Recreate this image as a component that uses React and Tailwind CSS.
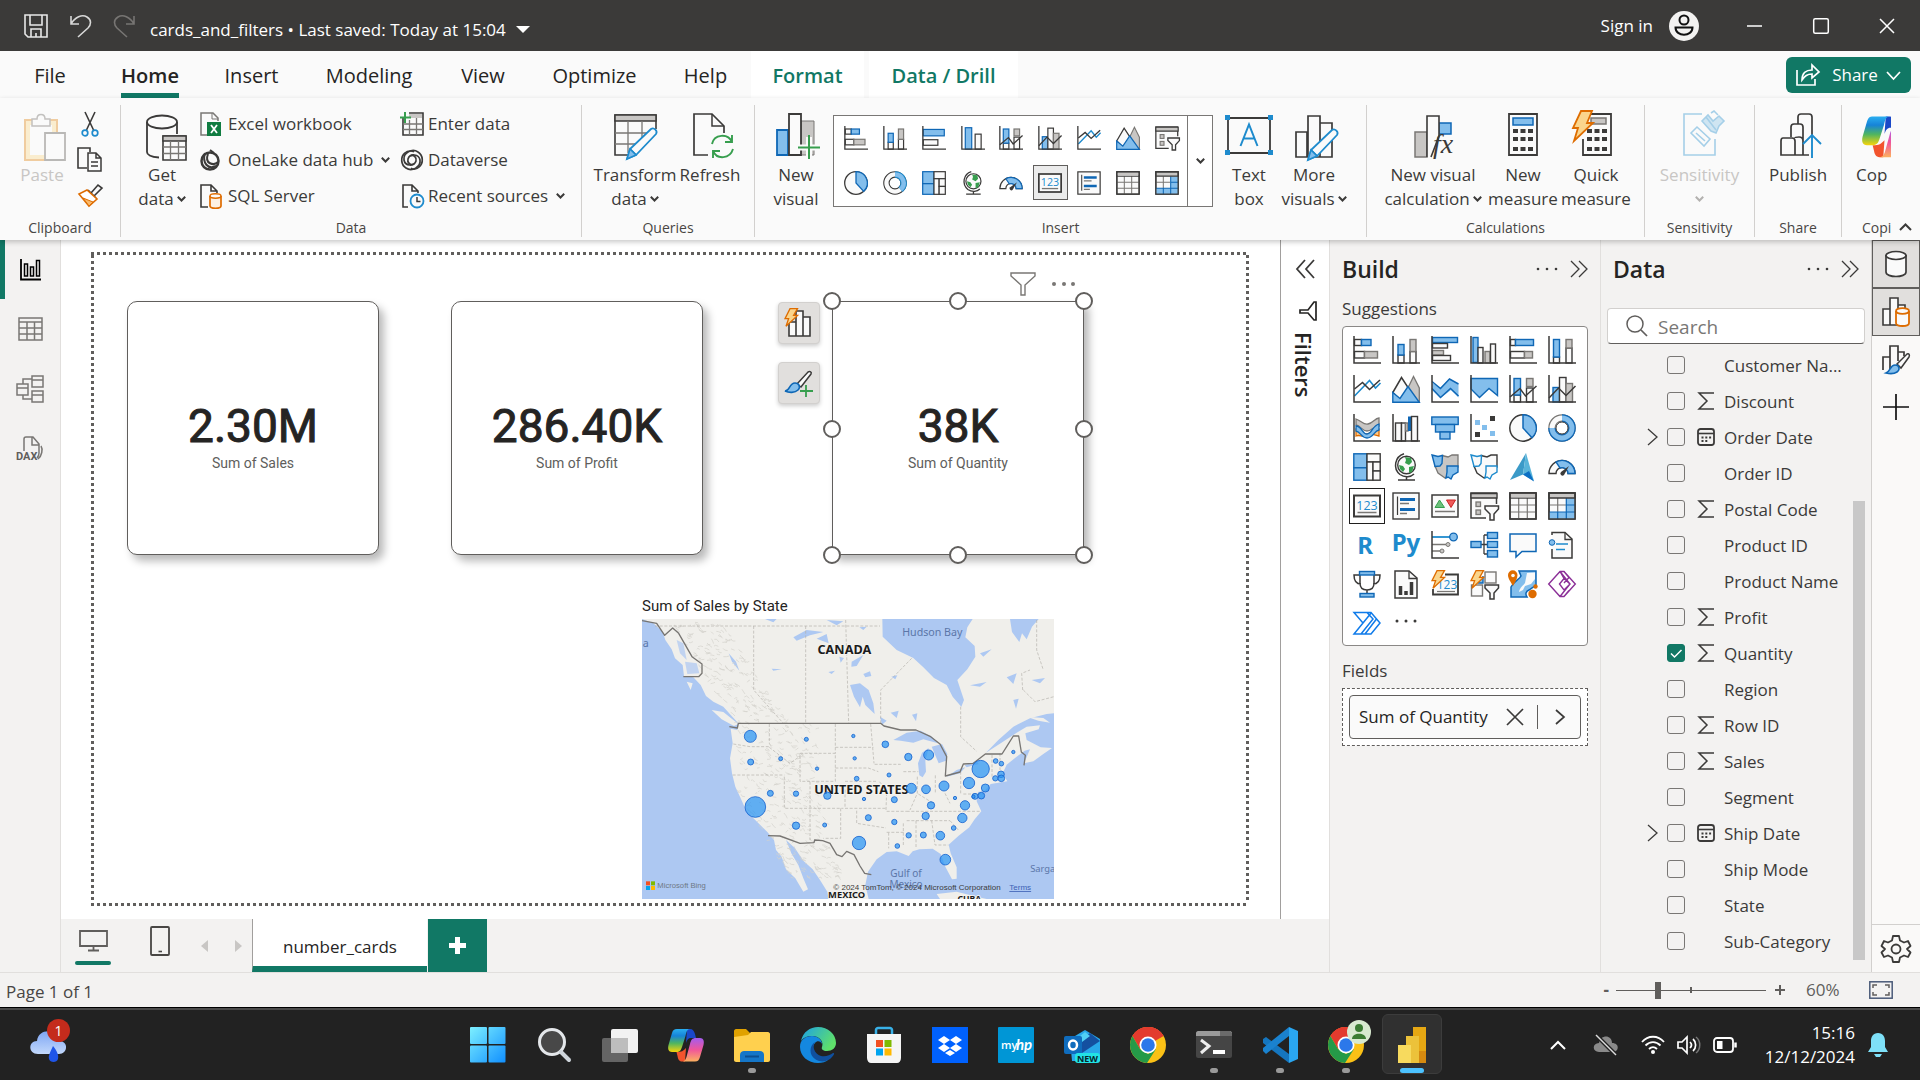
import React from "react";

const K = "#3b3a39";
const B = "#0f67b5";
const LB = "#83beec";
const G = "#797774";
const LG = "#c8c6c4";
const GR = "#379e4e";
const SKY = "#1e8bcd";
const OR = "#de6c00";

const FILLS = {
  w: ["#fafafa", K],
  b: [LB, B],
  g: [LG, G],
};

function Bx({ k = "w", x, y, w, h }) {
  return <rect x={x} y={y} width={w} height={h} fill={FILLS[k][0]} stroke={FILLS[k][1]} strokeWidth="1.4" />;
}
const Axis = () => <path d="M1 0V27H28" fill="none" stroke={K} strokeWidth="1.5" />;
const Bolt = () => <path d="M6 .7h7.5L9.6 7.4h4L2 18.3 4.6 10.6H1z" fill="#fad58c" stroke={OR} strokeWidth="1.3" />;
const Funnel = ({ x = 0, y = 0 }) => (
  <path transform={`translate(${x} ${y})`} d="M0 0H13.5V3L9 8V14H5V8L0 3Z" fill="#fafafa" stroke={K} strokeWidth="1.5" />
);

const ICONS = {
  stackedBar: <><Bx x={1.5} y={3.5} w={7} h={6} /><Bx k="b" x={8.5} y={3.5} w={9.5} h={6} /><Bx x={1.5} y={15.5} w={10} h={6.5} /><Bx k="g" x={11.5} y={15.5} w={13} h={6.5} /><Axis /></>,
  stackedCol: <><Bx x={6} y={19} w={6} h={8} /><Bx k="b" x={6} y={8.5} w={6} h={10.5} /><Bx x={18} y={15.5} w={6} h={11.5} /><Bx k="g" x={18} y={3.5} w={6} h={12} /><Axis /></>,
  clusteredBar: <><Bx k="b" x={1.5} y={1.5} w={25} h={5} /><Bx x={1.5} y={7.5} w={15} h={4.5} /><Bx k="g" x={1.5} y={14.5} w={11} h={4.5} /><Bx x={1.5} y={19.5} w={18} h={5} /><Axis /></>,
  clusteredCol: <><Bx k="b" x={3} y={1.5} w={5} h={25} /><Bx x={8} y={11.5} w={5} h={15.5} /><Bx k="g" x={15} y={15.5} w={5} h={11.5} /><Bx x={20.5} y={8} w={5} h={19} /><Axis /></>,
  bar2: <><Bx k="b" x={1.5} y={4} w={24.5} h={7.5} /><Bx x={1.5} y={16} w={17} h={6.5} /><Axis /></>,
  col2: <><Bx k="b" x={5} y={2} w={7.5} h={25} /><Bx x={16.5} y={9.5} w={7} h={17.5} /><Axis /></>,
  fullBar: <><Bx x={1.5} y={3.5} w={5} h={6} /><Bx k="b" x={6.5} y={3.5} w={18} h={6} /><Bx x={1.5} y={15.5} w={14} h={6.5} /><Bx k="g" x={15.5} y={15.5} w={8} h={6.5} /><Axis /></>,
  fullCol: <><Bx x={5.5} y={21} w={6} h={6} /><Bx k="b" x={5.5} y={3.5} w={6} h={17.5} /><Bx x={18} y={12} w={6} h={15} /><Bx k="g" x={18} y={3.5} w={6} h={8.5} /><Axis /></>,
  line: <><path d="M1.5 21L16.5 5.5 22.5 13 27.5 8" fill="none" stroke={SKY} strokeWidth="1.6" /><path d="M1.5 14L9.5 7.5 16.5 14.5 27 5" fill="none" stroke={K} strokeWidth="1.6" /><Axis /></>,
  area: <><path d="M14 17L21.5 1.5 27.3 13V27H14Z" fill={LG} stroke={G} strokeWidth="1.3" /><path d="M.8 17.5L9.5 2.5 19 17 9 26Z" fill="#fafafa" stroke={K} strokeWidth="1.5" /><path d="M.8 17.5L8 23.5 16 11.5 27.3 27.3H.8Z" fill={LB} stroke={B} strokeWidth="1.4" /></>,
  stackedArea: <><path d="M1 8L9.5 12.5 18 4 27.5 9V22.5L20 15 9.5 23 1 15Z" fill={LB} /><path d="M1 6.5L9.5 13.5 18.5 4 27.5 9M1 13.5L9.5 22.5 19.5 13.5 27.5 21" fill="none" stroke={B} strokeWidth="1.5" /><Axis /></>,
  fullArea: <><path d="M1 3.5H27.5V20.5L19 13.5 9.5 22.5 1 14Z" fill={LB} stroke={B} strokeWidth="1.4" /><Axis /></>,
  comboStack: <><Bx x={5} y={20} w={6.5} h={7} /><Bx k="b" x={5} y={3.5} w={6.5} h={16.5} /><Bx x={17.5} y={13} w={6.5} h={14} /><Bx k="g" x={17.5} y={3.5} w={6.5} h={8} /><path d="M1 22L11 13.5 16.5 21 27.5 11" fill="none" stroke={K} strokeWidth="1.5" /><Axis /></>,
  comboCluster: <><Bx k="b" x={5} y={12.5} w={6.5} h={14.5} /><Bx x={11.5} y={2.5} w={6.5} h={24.5} /><Bx k="g" x={18} y={8.5} w={6.5} h={18.5} /><path d="M1 23L10.5 13 18 20.5 27.5 11" fill="none" stroke={K} strokeWidth="1.5" /><Axis /></>,
  ribbon: <><path d="M3 15C8 16 8 21 14 20S21 14 26 15V22C21 21 20 19 14 21.5S8 20 3 22Z" fill="#fdc98a" stroke={OR} strokeWidth="1.3" /><path d="M3 5C9 7 10 11 15 10S22 4 26 4V12C20 12 19 17 14 17S8 12 3 11Z" fill={LG} stroke={G} strokeWidth="1.3" /><path d="M3 12C9 12 9 20 14 20S19 12 26 10V16C21 17 20 24 14 24S8 18 3 17Z" fill={LB} stroke={B} strokeWidth="1.3" /><Axis /></>,
  waterfall: <><Bx x={3.5} y={9} w={6} h={18} /><Bx x={9.5} y={9} w={4} h={18} /><Bx k="g" x={13.5} y={9} w={2.5} h={8} /><rect x="16" y="2.5" width="3" height="14.5" fill={B} /><Bx x={19.5} y={2.5} w={6} h={24.5} /><Axis /></>,
  funnel: <><Bx k="b" x={.8} y={3} w={26.4} h={7.5} /><Bx k="b" x={4.5} y={10.5} w={19} h={7.5} /><Bx k="b" x={9} y={18} w={10} h={7} /></>,
  scatter: <><g fill={LB}><rect x="5" y="6" width="5" height="5" /><rect x="12" y="11" width="5" height="5" /><rect x="20" y="17" width="5" height="5" /></g><g fill={K}><rect x="20" y="2" width="5" height="5" /><rect x="5" y="18" width="5" height="5" /></g><Axis /></>,
  pie: <><circle cx="14" cy="14" r="13.2" fill="#fafafa" stroke={K} strokeWidth="1.5" /><path d="M14 .8A13.2 13.2 0 0 1 23 23.7L14 14Z" fill={LB} stroke={B} strokeWidth="1.5" /></>,
  donut: <><circle cx="14" cy="14" r="10" fill="none" stroke={G} strokeWidth="7.5" /><circle cx="14" cy="14" r="10" fill="none" stroke="#fafafa" strokeWidth="5" /><path d="M14 4A10 10 0 1 1 4 14" fill="none" stroke={B} strokeWidth="7.5" /><path d="M14 4A10 10 0 1 1 4 14" fill="none" stroke={LB} strokeWidth="5" /><circle cx="14" cy="14" r="6" fill="none" stroke={K} /></>,
  ring: <><circle cx="14" cy="14" r="10" fill="none" stroke={K} strokeWidth="7.5" /><circle cx="14" cy="14" r="10" fill="none" stroke="#fafafa" strokeWidth="5" /><path d="M14 4A10 10 0 0 1 20.500 21.600" fill="none" stroke={SKY} strokeWidth="7.5" /><path d="M14 4A10 10 0 0 1 20.500 21.600" fill="none" stroke={LB} strokeWidth="5.2" /></>,
  treemap: <><Bx k="b" x={.8} y={.8} w={13} h={14} /><Bx k="b" x={.8} y={14.8} w={13} h={12.4} /><Bx x={14} y={.8} w={13.2} h={8.2} /><Bx x={14} y={9} w={6} h={18.2} /><Bx x={20} y={9} w={7.2} h={9} /><Bx x={20} y={18} w={7.2} h={9.2} /></>,
  globe: <><circle cx="14.5" cy="12" r="8.8" fill="#fafafa" stroke={K} strokeWidth="1.4" /><path d="M13 4l6 1 1 4-3 3-4-2 1-3zM17 14l5-1-2 6-3 1zM7 12l4 1 2 3-2 3-3-3z" fill={GR} /><path d="M12 .7A12 12 0 0 0 8 21.5C13 25 19 24 22 21M14.5 24V27M6 27H23" fill="none" stroke={K} strokeWidth="1.5" /></>,
  shapeMap: <><path d="M11 2.500L17 4l4-2h6v12l-4 6-6 3-3 2-7-5-3-7 5-3z" fill={LG} stroke={G} strokeWidth="1.3" /><path d="M1 2l6 1.500 4.500-1-.5 8-2 2.500-5 .500-1-4zM16 13h11v6l-5 3-2 4-3-2-2 1 1-6z" fill={LB} stroke={B} strokeWidth="1.4" /></>,
  filledMap: <><path d="M11 2.500L17 4l4-2h6v12l-4 6-6 3-3 2-7-5-3-7 5-3z" fill="#fafafa" stroke={K} strokeWidth="1.4" /><path d="M1 2l6 1.500 4.500-1-.5 8-2 2.500-5 .500-1-4zM16 13h11v6l-5 3-2 4-3-2-2 1 1-6z" fill="#fafafa" stroke={SKY} strokeWidth="1.4" /></>,
  azure: <><path d="M17 0L1 27 14 21.500Z" fill="#3b9ac8" /><path d="M17 0L14 21.500 25 28Z" fill="#58b4da" /><path d="M14 21.500L20 18 25 28.500Z" fill="#0c6fc4" /></>,
  gauge: <><path d="M1 20.500A13 13 0 0 1 27 20.500H20A6 6 0 0 0 8 20.500Z" fill="#fafafa" stroke={K} strokeWidth="1.4" /><path d="M8 9A13 13 0 0 1 27 20.500H20A6 6 0 0 0 12 15Z" fill={LB} stroke={B} strokeWidth="1.4" /><path d="M21 13l-5 9a2 2 0 0 1-3-3z" fill={K} /></>,
  card: <><rect x="1" y="3.500" width="26" height="21" fill="#fafafa" stroke={K} strokeWidth="2" /><text x="14" y="17.500" textAnchor="middle" fontSize="12.500" fill={SKY} fontFamily="Open Sans, sans-serif">123</text><path d="M4.500 20.500H23.500" stroke={G} strokeWidth="1.500" /></>,
  multiRow: <><Bx x={1} y={1} w={26} h={26} /><path d="M5.500 4.500V23" stroke={K} strokeWidth="1.200" /><path d="M8 7.500H23M8 17.500H23" stroke={B} strokeWidth="3" /><path d="M8 11.500H17M8 21.500H15" stroke={G} strokeWidth="1.500" /></>,
  kpi: <><rect x="1" y="3" width="26" height="22" fill="#fafafa" stroke={K} strokeWidth="1.500" /><path d="M4 15.500L8.500 8 13.500 15.500Z" fill="#6cc07a" stroke={GR} /><path d="M15.500 8H24.500L20 15.500Z" fill="#ef5a5a" stroke="#c22" /><path d="M4 19.500H24" stroke={G} strokeWidth="1.500" /></>,
  slicer: <><path d="M16 26H1V1H26.500V12" fill="#fafafa" stroke={K} strokeWidth="1.500" /><path d="M1 1.500H27V6H1Z" fill={LG} stroke={K} strokeWidth="1.300" /><g fill={LG} stroke={G} strokeWidth="1.300"><rect x="6" y="10" width="4.500" height="4.500" /><rect x="6" y="18" width="4.500" height="4.500" /></g><Funnel x={15} y={14} /></>,
  table: <><Bx x={1} y={1} w={26} h={26} /><path d="M9.700 6V27M18.300 6V27M1 13H27M1 20H27" stroke={G} strokeWidth="1.200" /><Bx x={1} y={1} w={26} h={5} /><path d="M2 2H26V5.500H2Z" fill={LG} /><rect x="1" y="1" width="26" height="26" fill="none" stroke={K} strokeWidth="1.500" /></>,
  matrix: <><Bx x={1} y={1} w={26} h={26} /><path d="M18.300 6H27V27H1V20H18.300Z" fill={LB} /><path d="M9.700 6V20M1 13H18" stroke={G} strokeWidth="1.200" /><path d="M9.700 20V27M18.300 6V27M18 13H27M1 20H27" stroke={B} strokeWidth="1.200" /><path d="M1 1H27V6H1Z" fill={LG} stroke={K} strokeWidth="1.400" /><rect x="1" y="1" width="26" height="26" fill="none" stroke={K} strokeWidth="1.500" /></>,
  r: <text x="12" y="22.500" textAnchor="middle" fontSize="24" fontWeight="700" fill={SKY} fontFamily="Noto Sans, sans-serif">R</text>,
  py: <text x="14" y="20" textAnchor="middle" fontSize="24" fontWeight="700" fill={SKY} fontFamily="Noto Sans, sans-serif">Py</text>,
  keyInfl: <><path d="M1 6H20" stroke={SKY} strokeWidth="1.800" /><path d="M1 13.500H15M1 20H9" stroke={G} strokeWidth="1.500" /><circle cx="22.500" cy="6" r="3.800" fill={LB} stroke={B} strokeWidth="1.300" /><circle cx="17" cy="13.500" r="2" fill={LG} stroke={G} /><circle cx="11" cy="20" r="2" fill={LG} stroke={G} /><Axis /></>,
  decomp: <><path d="M10 13.500H18M14 4H18M14 23H18M14 4V23" fill="none" stroke={K} strokeWidth="1.300" /><Bx k="b" x={1} y={10.500} w={10} h={6} /><Bx k="b" x={17.500} y={1.500} w={10} h={6} /><Bx k="b" x={17.500} y={10.500} w={10} h={6} /><Bx k="b" x={17.500} y={19.500} w={10} h={6.500} /></>,
  qna: <path d="M1 3H27V20.500H13L7 26V20.500H1Z" fill="#fafafa" stroke={B} strokeWidth="1.500" />,
  narrative: <><path d="M4 4V1.500H17L24 8V27H4V18" fill="#fafafa" stroke={K} strokeWidth="1.500" /><path d="M17 1.500V8.500H24" fill="none" stroke={K} strokeWidth="1.300" /><circle cx="4" cy="11.500" r="2.800" fill={LB} stroke={B} /><path d="M8 13H20M8 18.500H17" stroke={SKY} strokeWidth="1.500" /></>,
  trophy: <><path d="M7 4H21V13C21 18 18 20 14 20S7 18 7 13ZM7 5H1C1 11 4 14 8 14M21 5H27C27 11 24 14 20 14M14 20V24" fill="none" stroke={K} strokeWidth="1.500" /><Bx k="b" x={6.500} y={1.500} w={15} h={3.500} /><Bx k="b" x={7} y={23.500} w={14} h={3.500} /></>,
  report: <><path d="M3 1H17L25 8V28H3Z" fill="#fafafa" stroke={K} strokeWidth="1.500" /><path d="M17 1V8.500H25" fill="none" stroke={K} strokeWidth="1.300" /><path d="M8.500 25V16M14 25V21M19.500 25V12" stroke={K} strokeWidth="3.500" /></>,
  boltCard: <><path d="M14 4.500H27V24.500H2V19" fill="#fafafa" stroke={K} strokeWidth="1.800" /><text x="16" y="19" textAnchor="middle" fontSize="12" fill={SKY} fontFamily="Open Sans, sans-serif">123</text><path d="M6 21.500H24" stroke={G} strokeWidth="1.200" /><Bolt /></>,
  boltSlicer: <><g fill="#fafafa" stroke={G} strokeWidth="1.400"><rect x="15" y="2" width="11" height="11" /><rect x="1.500" y="15" width="11" height="11" /></g><path d="M8 13H13V6" fill={LB} stroke={B} strokeWidth="1.400" /><Funnel x={15} y={15} /><Bolt /></>,
  arcgis: <><path d="M2 17V27H18C16 24 17 21 20 20L27 15V1H10L12 6C10 10 6 10 2 17Z" fill={LB} stroke={B} strokeWidth="1.500" /><path d="M18 3l8-.5V9l-4 5-6 2-2 4-4 2c1-5 4-6 6-9z" fill="#fafafa" /><path d="M-1 5A4.700 4.700 0 0 1 8.500 5C8.500 9 6 12 4 16 2 12-1 9-1 5Z" fill={OR} /><circle cx="4" cy="5.500" r="1.800" fill="#fafafa" /><circle cx="23.500" cy="24" r="4.200" fill={OR} /><circle cx="26.500" cy="16.500" r="2.200" fill={OR} /></>,
  powerApps: <g fill="none" stroke="#8b2f97" strokeWidth="1.400"><path d="M12 1.500H16L27.300 14 16 26.500H12L.7 14ZM12 1.500L22 14 12 26.500M11.500 14L16 8.500 22 14 16 20ZM16 1.500L21 7.500 16 13M12 1.500L16 8.500M16 26.500L21 20.500" /></g>,
  automate: <g fill="none" stroke="#0f7bea" strokeWidth="1.500"><path d="M1 3.500H18L27 14 18 25H1L10 14ZM14 3.500L20 10 8 25M10 14L18.500 3.500M23.500 10L12 25" /></g>,
};

function Ic({ n, s = 28 }) {
  return (
    <svg viewBox="0 0 28 28" width={s} height={s} className="shrink-0 overflow-visible" aria-hidden="true">
      {ICONS[n]}
    </svg>
  );
}

function Svg({ w, h, children, vb }) {
  return (
    <svg width={w} height={h} viewBox={vb || `0 0 ${w} ${h}`} fill="none" className="shrink-0 overflow-visible" aria-hidden="true">
      {children}
    </svg>
  );
}

const Chev = ({ w = 9, c = K }) => (
  <Svg w={w} h={6} vb="0 0 9 6"><path d="M.8 .8L4.500 4.500 8.200 .8" stroke={c} strokeWidth="2" /></Svg>
);
const Pencil = () => (
  <path d="M14 46L17 36 38 16C41 14 45 18 43 21L23 42Z M17 36L23 42" fill="#fafafa" stroke={SKY} strokeWidth="1.800" />
);
const PencilTip = () => <path d="M14 46L17 36 23 42Z" fill={LB} stroke={SKY} strokeWidth="1.500" />;

const BIG = {
  paste: <g opacity=".9" transform="translate(4 0)"><path d="M2 7H34V47H2Z" fill="#faeccb" stroke="#f0c896" strokeWidth="2" /><path d="M7 12H29V42H7Z" fill="#fafafa" /><path d="M9 6H14C14 0 22 0 22 6H27V13H9Z" fill="#fafafa" stroke="#bdbbb9" strokeWidth="1.500" /><path d="M22 20H42V47H22Z" fill="#fafafa" stroke="#b3b1af" strokeWidth="1.800" /></g>,
  getData: <g transform="translate(5 1)"><ellipse cx="18" cy="8" rx="15" ry="6.500" stroke={K} strokeWidth="1.800" /><path d="M3 8V38C3 41 8 43 15 43.500M33 8V20" stroke={K} strokeWidth="1.800" /><path d="M19 22H42V46H19Z" fill="#fafafa" stroke={K} strokeWidth="1.600" /><path d="M19 22H42V27H19Z" fill={LG} stroke={K} strokeWidth="1.300" /><path d="M26.500 27V46M34.500 27V46M19 33H42M19 39.500H42" stroke={G} strokeWidth="1.300" /></g>,
  transform: <g transform="translate(1 0)"><path d="M15 42H2V2H43V16" fill="#fafafa" stroke={K} strokeWidth="1.600" /><path d="M2 2H43V8H2Z" fill={LG} stroke={K} strokeWidth="1.500" /><path d="M15 8V40M29 8V28M2 20H34M2 31H22" stroke={G} strokeWidth="1.300" /><Pencil /><PencilTip /></g>,
  refresh: <g transform="translate(3 0)"><path d="M18 42H4V1H22L34 13V20" stroke={K} strokeWidth="1.700" /><path d="M22 1V13H34" stroke={K} strokeWidth="1.500" /><path d="M22 31C24 21 38 20 42 29M43 36C40 46 27 47 23 38M42 22V29H35M23 45V38H30" stroke={GR} strokeWidth="1.900" /></g>,
  newVisual: <g transform="translate(2 0)"><path d="M2 17H13V42H2Z" fill={LB} stroke={B} strokeWidth="1.800" /><path d="M26 8H39V42H26Z" fill={LG} stroke={G} /><path d="M14 1H26V42H14Z" fill="#fafafa" stroke={K} strokeWidth="1.800" /><path d="M34 24V45M23 34.500H45" stroke="#fafafa" strokeWidth="6" /><path d="M34 22V46M23 34.500H45" stroke={GR} strokeWidth="2" /></g>,
  textBox: <g transform="translate(-1 1)"><path d="M3 4H45V39H3Z" stroke={K} strokeWidth="1.800" /><g fill={SKY}><rect x="0" y="1" width="5" height="5" /><rect x="43" y="1" width="5" height="5" /><rect x="0" y="36" width="5" height="5" /><rect x="43" y="36" width="5" height="5" /></g><path d="M15.500 32L24 10.500 32.500 32M18.500 24.500H29.500" stroke={SKY} strokeWidth="2" /></g>,
  moreVisuals: <g transform="translate(3 1)"><path d="M2 18H13V43H2ZM14 2H26V43H14ZM26 9H38V43H26Z" fill="#fafafa" stroke={K} strokeWidth="1.700" /><Pencil /><PencilTip /></g>,
  calcVisual: <g transform="translate(3 1)"><path d="M2 18H14V43H2Z" fill={LG} stroke={G} strokeWidth="1.500" /><path d="M26 9H38V20H26Z" fill={LB} stroke={B} strokeWidth="1.500" /><path d="M14 43V2H26V22L18 43" fill="#fafafa" stroke={K} strokeWidth="1.600" /><text x="20" y="39" fontSize="28" fontStyle="italic" fill={K} fontFamily="Liberation Serif, serif">fx</text></g>,
  measure: <><path d="M9 1H37V42H9Z" stroke={K} strokeWidth="1.800" /><path d="M13 5H33V12H13Z" fill={LB} stroke={B} strokeWidth="1.500" /><path d="M13 18H33M13 26H33M13 36H33" stroke={K} strokeWidth="4" strokeDasharray="5 2.500" /></>,
  quick: <><path d="M9 1H38V42H10V26" stroke={K} strokeWidth="1.800" /><path d="M18 5H33V11H18Z" fill={LG} stroke={G} strokeWidth="1.500" /><path d="M14 18H34M14 26H34M14 36H34" stroke={K} strokeWidth="4" strokeDasharray="5 2.500" /><path d="M8 -2H19L14 10H20L1 28 5 15H0Z" fill="#fad58c" stroke={OR} strokeWidth="1.800" /></>,
  sensitivity: <g stroke="#a5cfe8" strokeWidth="1.600" transform="translate(3 0)"><path d="M22 1H4V42H35V26" /><path d="M22 8L31 18 36 20 39 13 44 8 39 3 33 8 28 2Z" fill="#cfe5f2" /><path d="M26 4L36 17M31 0L34 -2 38 2" /><path d="M11 20L17 14 30 26 24 33ZM16 20L25 28" /></g>,
  publish: <g transform="translate(4 0)"><path d="M12 24V14C12 12 13 11 15 11H19M19 11V4C19 2 20 1 22 1H30C32 1 33 2 33 4V22M16 11H21C23 11 24 12 24 14V42M4 25H13C15 25 16 26 16 28V42H2V28C2 26 3 25 4 25ZM16 25C16 24 18 24 20 24C23 24 24 26 24 28M2 42H30" stroke={K} strokeWidth="1.700" /><path d="M33 45V23M24 31L33 22 42 31" stroke={SKY} strokeWidth="1.900" /></g>,
};

function BigBtn({ icon, label, second, chev, cls, muted }) {
  return (
    <button className={"flex shrink-0 flex-col items-center whitespace-nowrap " + cls + (muted ? " text-[#c8c6c4]" : " text-[#3b3a39]")}>
      <Svg w={46} h={48}>{BIG[icon]}</Svg>
      <span className="mt-[2px] leading-6">{label}</span>
      {(second || chev) && (
        <span className="flex h-6 items-center gap-[3px] leading-6">
          {second}
          {chev && <Chev c={muted ? "#b3b1af" : K} />}
        </span>
      )}
    </button>
  );
}

function Group({ name, cls, children, last }) {
  return (
    <section className={"flex shrink-0 flex-col " + cls + (last ? " overflow-hidden" : " border-r border-[#d2d0ce]")}>
      <div className="flex h-[114px] pt-2">{children}</div>
      <h2 className="pt-[3px] text-center text-sm leading-[18px] text-[#484644]">{name}</h2>
    </section>
  );
}

const SMALL = {
  excel: <><path d="M8 23H1V1H13L18 6V9" stroke={G} strokeWidth="1.500" /><path d="M12 1V7H18" stroke={G} /><rect x="7" y="10" width="14" height="14" fill="#107c41" /><path d="M11 13L17 21M17 13L11 21" stroke="#fff" strokeWidth="1.800" /></>,
  onelake: <><circle cx="10" cy="13" r="8.500" stroke={K} strokeWidth="2.500" /><path d="M5 5C2 15 8 22 16 18M8 6C4 16 14 18 18 14M10 2L14 5" stroke={K} strokeWidth="2" /></>,
  sql: <><path d="M8 23H1V1H11L17 7V9M11 1V7H17" stroke={K} strokeWidth="1.600" /><path d="M10 12V22C10 25 21 25 21 22V12" fill="#fdf1e3" stroke={OR} strokeWidth="1.700" /><ellipse cx="15.500" cy="12" rx="5.500" ry="2.200" fill="#fafafa" stroke={OR} strokeWidth="1.500" /></>,
  enter: <><path d="M3 6V23H23V1H9" stroke={K} strokeWidth="1.600" /><path d="M9 2H22V6H9Z" fill={LG} /><path d="M3 12H23M3 17.500H23M9.500 8V23M16.500 6V23" stroke={G} strokeWidth="1.300" /><path d="M5 0V11M0 5.500H11" stroke={GR} strokeWidth="2" /></>,
  dataverse: <g stroke={K} strokeWidth="1.700"><path d="M14 16C10 18 7 14 8 11C10 5 19 6 20 12C21 19 12 24 6 20C1 17 0 9 5 5C8 2 13 3 14 4" /><path d="M10 8C14 6 17 10 16 13C14 19 5 18 4 12C3 5 12 0 18 4C23 7 24 15 19 19C17 21 13 22 11 20" /></g>,
  recent: <><path d="M8 23H3V1H12L18 7V9M12 1V7H18" stroke={K} strokeWidth="1.600" /><circle cx="17" cy="17" r="6.500" fill="#fafafa" stroke={SKY} strokeWidth="1.800" /><path d="M17 13V17.500H20.500" stroke={K} strokeWidth="1.500" /></>,
  cut: <><path d="M7 0L16 19M17 0L8 19" stroke={K} strokeWidth="1.600" /><circle cx="7" cy="21" r="2.800" stroke={SKY} strokeWidth="1.700" /><circle cx="17" cy="21" r="2.800" stroke={SKY} strokeWidth="1.700" /></>,
  copy: <><path d="M9 20H0V0H12V4" stroke={K} strokeWidth="1.600" /><path d="M10 5H18L23 10V23H10ZM18 5V10H23M13 14H20M13 18H20" stroke={K} strokeWidth="1.500" /></>,
  brush: <><path d="M10 6L18 14M13 9L20 1 24 4 16 12" fill="#fafafa" stroke={K} strokeWidth="1.600" /><path d="M9 6L1 10 11 22 19 15Z" fill="#fff" stroke={OR} strokeWidth="1.600" /><path d="M5 14L15 18 11 22Z" fill="#f9b96a" stroke={OR} /></>,
};

function SmallBtn({ icon, children, chev }) {
  return (
    <button className="flex h-9 items-center gap-1 whitespace-nowrap leading-6 text-[#3b3a39]">
      <Svg w={24} h={24}>{SMALL[icon]}</Svg>
      {children}
      {chev && <span className="ml-1"><Chev /></span>}
    </button>
  );
}

const GALLERY = [
  "stackedBar", "stackedCol", "bar2", "col2", "comboStack", "comboCluster", "line", "area", "slicer",
  "pie", "ring", "treemap", "globe", "gauge", "card", "multiRow", "table", "matrix",
];
const VISUALS = [
  "stackedBar", "stackedCol", "clusteredBar", "clusteredCol", "fullBar", "fullCol",
  "line", "area", "stackedArea", "fullArea", "comboStack", "comboCluster",
  "ribbon", "waterfall", "funnel", "scatter", "pie", "donut",
  "treemap", "globe", "shapeMap", "filledMap", "azure", "gauge",
  "card", "multiRow", "kpi", "slicer", "table", "matrix",
  "r", "py", "keyInfl", "decomp", "qna", "narrative",
  "trophy", "report", "boltCard", "boltSlicer", "arcgis", "powerApps",
  "automate",
];

function TitleBar() {
  return (
    <header className="flex h-[51px] shrink-0 items-center bg-[#3b3a39] text-[17px] text-white">
      <button aria-label="Save" className="ml-6">
        <Svg w={24} h={24}><path d="M1 1H23V23H4L1 20ZM6 1V11H18V1M7 23V15H17V23M12 19V23" stroke="#e8e8e8" strokeWidth="1.600" /></Svg>
      </button>
      <button aria-label="Undo" className="ml-[22px]">
        <Svg w={22} h={24}><path d="M1 2V10H9M1 10C5 3 12 0 17 3S21 11 18 14L8 23" stroke="#d8d8d8" strokeWidth="1.600" /></Svg>
      </button>
      <button aria-label="Redo" className="ml-[22px]">
        <Svg w={22} h={24}><path d="M20 2V10H12M20 10C16 3 9 0 4 3S0 11 3 14L13 23" stroke="#777573" strokeWidth="1.600" /></Svg>
      </button>
      <button className="ml-[14px] mt-2 flex items-center gap-[10px]">
        cards_and_filters • Last saved: Today at 15:04
        <Svg w={14} h={8}><path d="M0 0H14L7 7Z" fill="#fff" /></Svg>
      </button>
      <div className="flex-1" />
      <button className="flex items-center gap-4">
        Sign in
        <Svg w={30} h={30}><circle cx="15" cy="15" r="15" fill="#f3f2f1" /><circle cx="15" cy="9" r="4.500" stroke="#111" strokeWidth="2" /><path d="M6.500 16.500H23.500C23.500 26 6.500 26 6.500 16.500Z" stroke="#111" strokeWidth="2" /></Svg>
      </button>
      <button aria-label="Minimize" className="ml-12"><Svg w={15} h={16}><path d="M0 8H15" stroke="#fff" strokeWidth="1.500" /></Svg></button>
      <button aria-label="Maximize" className="ml-[51px]"><Svg w={16} h={16}><rect x=".7" y=".7" width="14.600" height="14.600" rx="1.500" stroke="#fff" strokeWidth="1.500" /></Svg></button>
      <button aria-label="Close" className="ml-[50px] mr-[25px]"><Svg w={16} h={16}><path d="M1 1L15 15M15 1L1 15" stroke="#fff" strokeWidth="1.500" /></Svg></button>
    </header>
  );
}

function Tabs() {
  return (
    <nav className="flex h-[47px] shrink-0 bg-[#fafafa] pl-[10px] text-[20px] leading-[50px] text-[#252423]">
      <button className="w-[80px]">File</button>
      <button className="ml-2 flex w-[104px] justify-center font-semibold">
        <span className="h-[47px] border-b-[5px] border-[#117865]">Home</span>
      </button>
      <button className="w-[99px]">Insert</button>
      <button className="w-[136px]">Modeling</button>
      <button className="w-[92px]">View</button>
      <button className="w-[131px]">Optimize</button>
      <button className="w-[91px]">Help</button>
      <button className="w-[113px] bg-white font-semibold text-[#117865]">Format</button>
      <button className="ml-[5px] w-[149px] bg-white font-semibold text-[#117865]">Data / Drill</button>
      <div className="flex-1" />
      <button className="mr-[9px] mt-[6px] flex h-9 w-[125px] items-center justify-center gap-3 rounded-md bg-[#117865] text-[17px] leading-6 text-white">
        <Svg w={24} h={22}><path d="M1 6V21H19V15M6 16C6 9 10 6 16 6V1L23 8 16 14V10C11 10 9 12 6 16Z" stroke="#fff" strokeWidth="1.700" /></Svg>
        <span className="flex items-center gap-2">Share<Svg w={15} h={9}><path d="M1 1L7.500 8 14 1" stroke="#fff" strokeWidth="1.700" /></Svg></span>
      </button>
    </nav>
  );
}

function Ribbon() {
  return (
    <div className="relative z-10 flex h-[142px] shrink-0 items-stretch overflow-hidden bg-[#fafafa] pb-[3px] pt-[7px] text-[17px] shadow-[0_2px_5px_rgba(0,0,0,0.22)]">
      <Group name="Clipboard" cls="w-[121px]">
        <BigBtn icon="paste" label="Paste" cls="ml-3 w-[60px]" muted />
        <div className="-mt-2 ml-[6px] flex flex-col pt-px">
          {["cut", "copy", "brush"].map((n) => (
            <button key={n} aria-label={n} className="flex h-9 items-center"><Svg w={24} h={24}>{SMALL[n]}</Svg></button>
          ))}
        </div>
      </Group>
      <Group name="Data" cls="w-[461px]">
        <BigBtn icon="getData" label="Get" second="data" chev cls="ml-[9px] w-16" />
        <div className="-mt-[7px] ml-[6px] w-[200px]">
          <SmallBtn icon="excel">Excel workbook</SmallBtn>
          <SmallBtn icon="onelake" chev>OneLake data hub</SmallBtn>
          <SmallBtn icon="sql">SQL Server</SmallBtn>
        </div>
        <div className="-mt-[7px]">
          <SmallBtn icon="enter">Enter data</SmallBtn>
          <SmallBtn icon="dataverse">Dataverse</SmallBtn>
          <SmallBtn icon="recent" chev>Recent sources</SmallBtn>
        </div>
      </Group>
      <Group name="Queries" cls="w-[173px]">
        <BigBtn icon="transform" label="Transform" second="data" chev cls="ml-[11px] w-[84px]" />
        <BigBtn icon="refresh" label="Refresh" cls="ml-[2px] w-[62px]" />
      </Group>
      <Group name="Insert" cls="w-[612px]">
        <BigBtn icon="newVisual" label="New" second="visual" cls="ml-[13px] w-14" />
        <div className="ml-[9px] mt-[2px] flex h-[92px] w-[380px] border border-[#797775] bg-white">
          <div className="grid flex-1 grid-cols-9 pb-px pl-[3px] pr-px">
            {GALLERY.map((n) => (
              <button key={n} aria-label={n} className="flex items-center justify-center">
                <span className={"flex h-[35px] w-[35px] items-center justify-center " + (n === "card" ? "border border-[#605e5c] bg-[#ebebeb]" : "")}>
                  <Ic n={n} s={24} />
                </span>
              </button>
            ))}
          </div>
          <button aria-label="More visuals" className="flex w-[25px] items-center justify-center border-l border-[#797775]"><Chev /></button>
        </div>
        <BigBtn icon="textBox" label="Text" second="box" cls="ml-[10px] w-[52px]" />
        <BigBtn icon="moreVisuals" label="More" second="visuals" chev cls="ml-[1px] w-[76px]" />
      </Group>
      <Group name="Calculations" cls="w-[278px]">
        <BigBtn icon="calcVisual" label="New visual" second="calculation" chev cls="ml-3 w-[108px]" />
        <BigBtn icon="measure" label="New" second="measure" cls="w-[72px]" />
        <BigBtn icon="quick" label="Quick" second="measure" cls="ml-[1px] w-[72px]" />
      </Group>
      <Group name="Sensitivity" cls="w-[110px]">
        <BigBtn icon="sensitivity" label="Sensitivity" chev muted cls="w-full" />
      </Group>
      <Group name="Share" cls="w-[87px]">
        <BigBtn icon="publish" label="Publish" cls="w-full" />
      </Group>
      <Group name={<span className="ml-5 block text-left">Copi</span>} cls="w-[49px]" last>
        <button aria-label="Copilot" className="ml-[14px] flex w-16 shrink-0 flex-col text-[#3b3a39]">
          <Svg w={46} h={48}><CopilotMark x={6} y={1} s={1.25} /></Svg>
          <span className="mt-[2px] text-left leading-6">Cop</span>
        </button>
      </Group>
      <button aria-label="Collapse ribbon" className="ml-auto mr-2 self-end pb-[6px]">
        <Svg w={13} h={8}><path d="M1 7L6.500 1.500 12 7" stroke={K} strokeWidth="2" /></Svg>
      </button>
    </div>
  );
}

function CopilotMark({ x = 0, y = 0, s = 1 }) {
  return (
    <g transform={`translate(${x} ${y}) scale(${s})`}>
      <defs>
        <linearGradient id="cpa" x1="0" y1="0" x2="0" y2="1"><stop offset="0" stopColor="#2aaef0" /><stop offset=".3" stopColor="#1683d8" /><stop offset=".62" stopColor="#4fb560" /><stop offset="1" stopColor="#f7d40a" /></linearGradient>
        <linearGradient id="cpb" x1="0" y1="0" x2="0" y2="1"><stop offset="0" stopColor="#a35cf0" /><stop offset=".5" stopColor="#f0569a" /><stop offset="1" stopColor="#fcb060" /></linearGradient>
      </defs>
      <path d="M19 2H22C25 2 26 4 27 7L28 11H23C20 11 19 13 18 16Z" fill="#1a48c8" />
      <path d="M17 34.500H14C11 34.500 10 32 9.500 29L8.500 25C14 25 15 24 18 21Z" fill="#f2542d" />
      <path d="M9 2H22C19 2 18.500 5 17.500 9L14 20C13 23 12 25 8 25H4C.5 25 -.5 22 .5 18L4 6C5 3 6 2 9 2Z" fill="url(#cpa)" />
      <path d="M27 34.500H14C17 34.500 18 32 19 28L22 17C23 13 24 11 28 11H32C35.500 11 36.500 14 35.500 18L32 30C31 33 30 34.500 27 34.500Z" fill="url(#cpb)" />
    </g>
  );
}

function LeftRail() {
  return (
    <nav className="flex w-[61px] shrink-0 flex-col border-r border-[#e1dfdd] bg-[#f3f2f1]">
      <button aria-label="Report view" className="flex h-[59px] items-center border-l-[5px] border-[#117865] pl-[15px]">
        <Svg w={22} h={22}><path d="M1 0V20.500H21" stroke="#000" strokeWidth="1.800" /><path d="M4.500 5H7.500V17H4.500ZM10.500 8H13.500V17H10.500ZM16.500 1.500H19.500V17H16.500Z" stroke="#000" strokeWidth="1.500" /></Svg>
      </button>
      <button aria-label="Table view" className="flex h-[60px] items-center justify-center">
        <Svg w={25} h={24}><path d="M1 1H24V23H1ZM1 5H24M1 11H24M1 17H24M9 5V23M16.500 5V23" stroke={G} strokeWidth="1.500" /></Svg>
      </button>
      <button aria-label="Model view" className="flex h-[60px] items-center justify-center">
        <Svg w={28} h={28}><path d="M1 9H12V20H1ZM1 13H12M16 1H27V12H16ZM16 5H27M16 16H27V27H16ZM16 20H27M7 9V4H16M7 20V24H16" stroke={G} strokeWidth="1.500" /></Svg>
      </button>
      <button aria-label="DAX query view" className="flex h-[60px] items-center justify-center">
        <Svg w={28} h={26}><path d="M8 15V3C8 2 9 1 10 1H17L23 8V17C23 19 22 21 21 22M16 1V9H23M25 10C27 13 26 20 22 23" stroke={G} strokeWidth="1.500" /><text x="0" y="24" fontSize="11" fontWeight="700" fill="#605e5c" fontFamily="Roboto, sans-serif">DAX</text></Svg>
      </button>
    </nav>
  );
}

const STATES = [
  [361, 439, 18], [529, 448, 6], [670, 438, 5], [766, 463, 10], [362, 516, 9], [452, 506, 6], [674, 505, 5], [835, 501, 11],
  [896, 495, 15], [561, 536, 5], [680, 566, 7], [777, 555, 6], [1052, 537, 26], [1097, 513, 7], [1114, 521, 7], [1150, 486, 5],
  [1113, 553, 10], [1096, 565, 8], [1114, 565, 10], [1017, 579, 17], [1066, 594, 12], [942, 588, 15], [888, 598, 13], [844, 595, 15],
  [592, 617, 11], [498, 611, 8], [421, 610, 9], [376, 651, 31], [702, 627, 5], [793, 629, 9], [1035, 619, 9], [1054, 617, 10], [1030, 620, 5],
  [975, 624, 5], [1005, 646, 14], [903, 646, 11], [887, 678, 11], [997, 684, 14], [715, 683, 9], [793, 696, 8], [971, 714, 7],
  [498, 707, 11], [584, 705, 6], [687, 759, 20], [802, 768, 7], [836, 736, 8], [880, 735, 9], [931, 737, 13], [946, 809, 16],
];

let seed = 20241;
const rand = () => {
  seed = (seed * 16807) % 2147483647;
  return seed / 2147483647;
};

const RELIEF = Array.from({ length: 480 }, () => {
  const y = 95 + rand() * 770;
  const left = y < 400 ? 110 + (y - 90) * 0.65 : 318 + Math.max(0, y - 600) * 0.6;
  const right = y < 400 ? 270 + (y - 90) * 0.65 : 560 + Math.max(0, y - 600) * 0.25;
  const x = left + rand() * (right - left);
  const step = () => `${Math.round(2 + rand() * 7)} ${Math.round(rand() * 12 - 4)}`;
  return `M${Math.round(x)} ${Math.round(y)}l${step()} ${step()}`;
}).join("");

function SalesMap() {
  return (
    <figure className="absolute left-[548px] top-[341px] w-[412px]">
      <figcaption className="h-[23px] font-[Roboto] text-[15px] leading-5 text-[#252423]">Sum of Sales by State</figcaption>
      <svg viewBox="36 87 1236 840" className="block w-full" role="img" aria-label="Map of sales by state">
        <rect x="36" y="87" width="1236" height="840" fill="#adc8f2" />
        <g fill="#f0efeb">
          <path d="M36 87L70 100 98 125 106 150 125 178 135 205 158 225 162 258 190 262 212 285 228 318 250 335 280 350 305 378 325 400 322 420 302 416 308 460 300 505 306 550 316 590 332 625 350 665 378 692 412 726 432 750 438 780 455 800 468 838 496 865 520 905 534 898 520 865 505 825 484 790 468 750 495 775 520 812 548 838 570 870 592 905 596 927H716L706 885 714 845 740 808 770 786 800 784 836 798 848 784 868 778 908 776 932 792 946 830 966 868 980 866 980 832 962 790 956 764 985 738 1018 712 1034 688 1054 664 1040 634 1044 606 1064 602 1082 582 1132 574 1118 550 1130 524 1158 502 1184 482 1200 478 1182 520 1210 514 1240 492 1266 474 1232 472 1190 450 1186 430 1226 418 1230 406 1190 410 1160 428 1112 460 1068 488 1105 450 1150 410 1200 385 1250 372 1272 370V87Z" />
          <path d="M245 360L280 366 325 402 312 408 275 388Z M170 275L188 280 182 300Z M1190 380L1240 384 1260 398 1225 392Z M920 912L980 905 1040 920 1070 927H930Z" />
        </g>
        <g fill="#adc8f2">
          <path d="M757 87L758 140 800 180 850 204 880 232 912 264 950 285 968 320 994 350 1002 330 982 270 1012 238 1036 200 1034 168 1006 142 1012 112 1028 87Z" />
          <path d="M1140 87L1146 126 1168 156 1176 130 1190 148 1206 110 1226 87Z M405 87H440L430 97Z M790 450L830 428 872 422 906 440 924 460 880 448 850 458 812 452Z M868 556L864 520 876 488 896 474 886 512 888 545 878 562Z M905 470L936 462 952 492 948 512 926 520Z M950 560L980 540 1006 532 990 550Z M1004 526L1040 514 1046 522 1010 532Z" />
          <path d="M660 285L690 280 716 300 730 340 734 372 706 345 698 320 690 352 672 320Z M490 142L530 120 580 126 540 136 500 152Z M665 215L700 195 680 228 664 230Z M425 236L455 238 430 242Z M296 190L318 215 328 242 306 215Z M700 252L720 244 724 258 706 262Z M750 380L770 392 756 404Z M782 368L806 362 800 384Z M846 374L862 370 858 394Z M1130 262L1160 250 1150 282Z M1205 270L1245 264 1230 280Z M1050 190L1085 178 1060 200Z M1150 330L1166 326 1158 356Z M1020 286L1070 276 1050 290Z M590 90L640 94 620 106Z M595 246L615 242 605 252Z M560 146L590 132 596 160Z M628 200L642 204 632 218Z M784 260L802 256 796 268Z M688 112L710 110 700 120Z" />
          <path d="M140 150L160 160 170 210 150 190Z M165 215L200 220 208 250 172 252Z" opacity=".7" />
        </g>
        <path d={RELIEF} fill="none" stroke="#d3d1cc" strokeWidth="2" />
        <g fill="none" stroke="#b3b0aa" strokeWidth="2" strokeDasharray="9 5">
          <path d="M75 108H750M371 108V300L460 400M527 108V400M647 90L656 400M752 400V300L846 204M992 350V440L1040 484" />
          <path d="M418 402V460L425 472M310 462L360 470H418M308 555H463M463 560V655H640M510 490H616V574H510ZM418 472L480 520 508 500M616 402V490M616 472H730M722 402L732 520M616 534H715L745 545M645 574H740M734 523H812M540 575V750M645 585V655H770M748 575L770 600 768 660M632 655V745H580M680 662V700L768 714M770 664H830M776 728V775M820 545H865M862 560V610L840 660M916 556V610M865 612L910 640M830 664H1050M830 692H960M858 692V775M905 692L915 765H955M770 727H822M820 700V768M945 610L960 640M1000 612H1060M992 545V612M960 692L985 720M1086 495V560M1110 490V540M1178 300L1175 250 1200 240M1180 300L1215 335 1272 320M1220 90V180L1240 240" />
        </g>
        <g fill="none" stroke="#777572" strokeWidth="4" strokeLinejoin="round">
          <path d="M36 92L80 100 104 136 128 114 146 130 186 200 216 222V250L206 260H160" />
          <path d="M298 410L322 414 325 400H752L762 408 812 420 858 420 902 440 930 462 950 500 946 558 990 546 1000 522 1030 520 1066 492H1116L1130 470 1150 438H1166L1174 486 1186 496 1182 526" />
          <path d="M414 737L450 738 510 760 552 758 554 750 578 752 600 760 620 794 636 800 650 784 672 794 690 828 704 850 724 854" />
        </g>
        <g fontFamily="Noto Sans, sans-serif" textAnchor="middle">
          <g fontWeight="700" fontSize="38" fill="#1c1c1c" stroke="#f5f4f1" strokeWidth="5" paintOrder="stroke">
            <text x="643" y="191">CANADA</text>
            <text x="694" y="612">UNITED STATES</text>
            <text x="650" y="923" fontSize="28">MEXICO</text>
            <text x="1018" y="935" fontSize="26">CUBA</text>
          </g>
          <g fontSize="32" fill="#5b76a8">
            <text x="907" y="139">Hudson Bay</text>
            <text x="828" y="861" fontSize="30">Gulf of</text>
            <text x="828" y="893" fontSize="30">Mexico</text>
            <text x="1245" y="846" fontSize="28">Sargas</text>
            <text x="47" y="170">a</text>
          </g>
        </g>
        <g fill="#2894f4" fillOpacity=".72" stroke="#1a65cf" strokeWidth="2.500">
          {STATES.map(([x, y, r], i) => <circle key={i} cx={x} cy={y} r={r} />)}
        </g>
        <g fontFamily="Liberation Sans, sans-serif" fontSize="24">
          <path d="M48 874H60V886H48Z" fill="#f25022" /><path d="M63 874H75V886H63Z" fill="#7fba00" />
          <path d="M48 888H60V900H48Z" fill="#00a4ef" /><path d="M63 888H75V900H63Z" fill="#ffb900" />
          <text x="82" y="895" fontSize="23" fill="#6e7885">Microsoft Bing</text>
          <text x="610" y="900" fill="#3c3c3c">© 2024 TomTom, © 2024 Microsoft Corporation</text>
          <text x="1138" y="900" fill="#3b5fb5" textDecoration="underline">Terms</text>
        </g>
      </svg>
    </figure>
  );
}

const HANDLES = [
  "left-[-10px] top-[-10px]", "left-[116px] top-[-10px]", "right-[-10px] top-[-10px]",
  "left-[-10px] top-[118px]", "right-[-10px] top-[118px]",
  "left-[-10px] bottom-[-10px]", "left-[116px] bottom-[-10px]", "right-[-10px] bottom-[-10px]",
];

function NumberCard({ value, label, place, selected }) {
  return (
    <article className={"absolute top-[46px] flex h-[254px] w-[252px] flex-col items-center border border-[#605e5c] bg-white pt-[95px] font-[Roboto] shadow-[5px_6px_8px_rgba(0,0,0,0.28)] " + place + (selected ? "" : " rounded-[10px]")}>
      <span className="text-[46px] leading-[58px] text-[#252423] [-webkit-text-stroke:1px_#252423]">{value}</span>
      <span className="text-sm leading-4 text-[#605e5c]">{label}</span>
      {selected && HANDLES.map((h) => (
        <span key={h} className={"absolute h-[18px] w-[18px] rounded-full border-2 border-[#605e5c] bg-white " + h} />
      ))}
    </article>
  );
}

function Report() {
  return (
    <div className="flex min-w-0 flex-1 pb-[13px] pl-[30px] pr-[31px] pt-3">
      <div className="flex flex-1 bg-[repeating-linear-gradient(90deg,#605e5c_0_3px,#ffffff_3px_6px)] py-[3px]">
        <div className="flex flex-1 bg-[repeating-linear-gradient(180deg,#605e5c_0_3px,#ffffff_3px_6px)] px-[3px]">
          <div className="relative flex-1 bg-white">
            <NumberCard value="2.30M" label="Sum of Sales" place="left-[33px]" />
            <NumberCard value="286.40K" label="Sum of Profit" place="left-[357px]" />
            <NumberCard value="38K" label="Sum of Quantity" place="left-[738px]" selected />
            <div className="absolute left-[916px] top-[17px] flex items-center gap-4">
              <button aria-label="Filters on visual"><Svg w={26} h={24}><path d="M1 1H25V4L15 13V23H11V13L1 4Z" stroke={G} strokeWidth="1.400" /></Svg></button>
              <button aria-label="More options"><Svg w={24} h={6}><g fill={G}><circle cx="2" cy="3" r="2" /><circle cx="12" cy="3" r="2" /><circle cx="21" cy="3" r="2" /></g></Svg></button>
            </div>
            <div className="absolute left-[684px] top-[47px] flex flex-col gap-[18px]">
              <button aria-label="Build visual" className="flex h-[42px] w-[42px] items-center justify-center rounded-sm border border-[#d2d0ce] bg-[#e1dfdd] shadow-[0_2px_4px_rgba(0,0,0,0.2)]">
                <Svg w={30} h={30}><path d="M5 14H12V28H5ZM12 3H19V28H12ZM19 9H26V28H19Z" fill="#fafafa" stroke={K} strokeWidth="1.600" /><Bolt /></Svg>
              </button>
              <button aria-label="Format visual" className="flex h-[42px] w-[42px] items-center justify-center rounded-sm border border-[#d2d0ce] bg-[#e1dfdd] shadow-[0_2px_4px_rgba(0,0,0,0.2)]">
                <Svg w={30} h={30}><path d="M13 16L24 4C26 3 28 4 27 6L17 19Z" fill="#fafafa" stroke={K} strokeWidth="1.500" /><path d="M1 23C6 23 5 15 11 15C15 15 17 19 14 22C11 25 5 25 1 23Z" fill={LB} stroke={B} strokeWidth="1.600" /><path d="M22 17V29M16 23H29" stroke={GR} strokeWidth="1.800" /></Svg>
              </button>
            </div>
            <SalesMap />
          </div>
        </div>
      </div>
    </div>
  );
}

function FiltersPane() {
  return (
    <aside className="flex w-[49px] shrink-0 flex-col items-center border-l border-[#a19f9d] bg-white pt-[19px]">
      <button aria-label="Expand filters" className="ml-[2px]"><Svg w={20} h={20}><path d="M9 1L1 10 9 19M18 1L10 10 18 19" stroke={K} strokeWidth="1.800" /></Svg></button>
      <button className="mt-[22px] flex flex-col items-center">
        <span className="ml-[6px]"><Svg w={18} h={20}><path d="M17 1V19H15L9 12H1V9H9L15 1Z" stroke="#252423" strokeWidth="1.700" /></Svg></span>
        <span className="mr-[2px] mt-[11px] text-[22px] font-semibold leading-6 text-[#252423] [writing-mode:vertical-rl]">Filters</span>
      </button>
    </aside>
  );
}

function PaneHead({ title }) {
  return (
    <div className="flex h-[58px] items-center pl-3 pr-3">
      <h2 className="flex-1 text-[23px] font-semibold text-[#252423]">{title}</h2>
      <button aria-label="More options"><Svg w={22} h={4}><g fill={K}><circle cx="2" cy="2" r="1.300" /><circle cx="11" cy="2" r="1.300" /><circle cx="20" cy="2" r="1.300" /></g></Svg></button>
      <button aria-label="Collapse pane" className="ml-3"><Svg w={18} h={18}><path d="M1 1L9 9 1 17M9 1L17 9 9 17" stroke={K} strokeWidth="1.300" /></Svg></button>
    </div>
  );
}

function BuildPane() {
  return (
    <aside className="w-[271px] shrink-0 border-l border-[#e1dfdd] bg-[#f3f2f1]">
      <PaneHead title="Build" />
      <div className="px-3">
        <h3 className="h-7 text-[17px] leading-[22px] text-[#3b3a39]">Suggestions</h3>
        <div className="grid grid-cols-6 rounded-sm border border-[#8a8886] bg-white py-[3px] pl-1 pr-[5px]">
          {VISUALS.map((n) => (
            <button key={n} aria-label={n} className="flex h-[39px] items-center justify-center">
              <span className={"flex h-9 w-9 items-center justify-center " + (n === "card" ? "border border-[#201f1e]" : "")}><Ic n={n} /></span>
            </button>
          ))}
          <button aria-label="Get more visuals" className="flex items-center justify-center"><Svg w={22} h={4}><g fill={K}><circle cx="2" cy="0" r="1.500" /><circle cx="11" cy="0" r="1.500" /><circle cx="20" cy="0" r="1.500" /></g></Svg></button>
        </div>
        <h3 className="mt-[14px] h-7 text-[17px] leading-[22px] text-[#3b3a39]">Fields</h3>
        <div className="border border-dashed border-[#605e5c] bg-white p-[6px]">
          <div className="flex h-11 items-center rounded border border-[#605e5c] bg-[#fafafa] pl-[9px] pr-[15px] text-[17px] text-[#252423]">
            <span className="flex-1 whitespace-nowrap">Sum of Quantity</span>
            <button aria-label="Remove field"><Svg w={18} h={18}><path d="M1 1L17 17M17 1L1 17" stroke={K} strokeWidth="1.700" /></Svg></button>
            <span className="mx-[13px] h-6 w-px bg-[#605e5c]" />
            <button aria-label="Field options" className="ml-1"><Svg w={10} h={16}><path d="M1 1L9 8 1 15" stroke={K} strokeWidth="1.700" /></Svg></button>
          </div>
        </div>
      </div>
    </aside>
  );
}

const FIELDS = [
  ["Customer Na...", ""], ["Discount", "s"], ["Order Date", "d"], ["Order ID", ""], ["Postal Code", "s"], ["Product ID", ""],
  ["Product Name", ""], ["Profit", "s"], ["Quantity", "s"], ["Region", ""], ["Row ID", "s"], ["Sales", "s"], ["Segment", ""],
  ["Ship Date", "d"], ["Ship Mode", ""], ["State", ""], ["Sub-Category", ""],
];

function DataPane() {
  return (
    <aside className="flex w-[271px] shrink-0 flex-col border-l border-[#e1dfdd] bg-[#f3f2f1]">
      <PaneHead title="Data" />
      <label className="ml-[6px] mr-[6px] mt-[10px] flex h-9 items-center gap-[10px] rounded border border-[#d2d0ce] border-b-[#605e5c] bg-white pl-[18px]">
        <Svg w={22} h={22}><circle cx="9" cy="9" r="8" stroke="#605e5c" strokeWidth="1.500" /><path d="M15 15L21 21" stroke="#605e5c" strokeWidth="1.700" /></Svg>
        <input aria-label="Search" placeholder="Search" className="w-full min-w-0 bg-transparent pt-[2px] text-[19px] outline-none placeholder:text-[#797775]" />
      </label>
      <div className="flex min-h-0 flex-1 overflow-hidden pt-[3px]">
        <ul className="flex-1 text-[17px] text-[#3b3a39]">
          {FIELDS.map(([name, kind]) => (
            <li key={name} className="flex h-9 items-center">
              <span className="flex w-[66px] items-center justify-end pr-[9px]">
                {kind === "d" && <button aria-label={"Expand " + name}><Svg w={11} h={18}><path d="M1 1L10 9 1 17" stroke={K} strokeWidth="1.300" /></Svg></button>}
              </span>
              <label className="flex items-center whitespace-nowrap">
                <span className="relative flex h-[18px] w-[18px]">
                  <input type="checkbox" defaultChecked={name === "Quantity"} className="peer h-[18px] w-[18px] appearance-none rounded-[3px] border border-[#797775] checked:border-[#117865] checked:bg-[#117865]" />
                  <svg viewBox="0 0 18 18" className="pointer-events-none absolute inset-0 hidden peer-checked:block"><path d="M4 9.500L7.500 13 14.500 6" fill="none" stroke="#fff" strokeWidth="1.500" /></svg>
                </span>
                <span className="ml-3 w-[27px]">
                  {kind === "s" && <Svg w={18} h={18}><path d="M17 1H2L10 9 2 17H17" stroke={K} strokeWidth="1.500" /></Svg>}
                  {kind === "d" && <Svg w={18} h={18}><rect x="1" y="1" width="16" height="16" rx="2.500" stroke={K} strokeWidth="1.800" /><path d="M1 5.500H17" stroke={K} strokeWidth="1.600" /><path d="M4.500 9.500H15M4.500 13H11" stroke={K} strokeWidth="2" strokeDasharray="2 1.800" /></Svg>}
                </span>
                <span className="pt-px">{name}</span>
              </label>
            </li>
          ))}
        </ul>
        <div className="mb-3 mr-[6px] mt-[154px] w-3 bg-[#c8c8c8]" />
      </div>
    </aside>
  );
}

function RightRail() {
  return (
    <nav className="flex w-[49px] shrink-0 flex-col border-l border-[#d2d0ce] bg-[#faf9f8]">
      <button aria-label="Data" className="flex h-12 items-center justify-center border border-[#605e5c] bg-[#e1dfdd]">
        <Svg w={24} h={28}><path d="M2 5V22C2 28 22 28 22 22V5" fill="#fafafa" stroke={K} strokeWidth="1.700" /><ellipse cx="12" cy="5.500" rx="10" ry="4" fill="#fafafa" stroke={K} strokeWidth="1.700" /></Svg>
      </button>
      <button aria-label="Build" className="flex h-12 items-center justify-center border border-[#605e5c] bg-[#e1dfdd]">
        <Svg w={28} h={30}><path d="M1 12H8V28H1ZM8 1H16V28H8ZM16 8H23V28H16Z" fill="#fafafa" stroke={K} strokeWidth="1.600" /><path d="M14 14V26C14 30 27 30 27 26V14" fill="#fafafa" stroke={OR} strokeWidth="1.800" /><ellipse cx="20.500" cy="14" rx="6.500" ry="2.800" fill="#fafafa" stroke={OR} strokeWidth="1.700" /></Svg>
      </button>
      <button aria-label="Format" className="flex h-12 items-center justify-center">
        <Svg w={28} h={30}><path d="M1 25V12H8V24M8 12V1H16V16M16 7H22V11" stroke={K} strokeWidth="1.700" /><path d="M15 19L25 9C27 8 28 10 27 12L19 23Z" fill="#fafafa" stroke={K} strokeWidth="1.500" /><path d="M4 28C9 26 8 20 13 20C18 20 18 25 15 27C12 29 8 29 4 28Z" fill={LB} stroke={B} strokeWidth="1.600" /></Svg>
      </button>
      <button aria-label="Add pane" className="flex h-[46px] items-center justify-center">
        <Svg w={26} h={26}><path d="M13 0V26M0 13H26" stroke="#111" strokeWidth="1.700" /></Svg>
      </button>
      <div className="flex-1" />
      <button aria-label="Pane options" className="flex h-12 items-center justify-center border-t border-[#d2d0ce]">
        <Svg w={30} h={28}><path d="M12 1H18L19 5.500 23 7.500 27 6 29.500 11 26 14 29.500 17.500 27 22 23 20.500 19 22.500 18 27H12L11 22.500 7 20.500 3 22 .5 17.500 4 14 .5 11 3 6 7 7.500 11 5.500Z" stroke={K} strokeWidth="1.800" strokeLinejoin="round" /><circle cx="15" cy="14" r="4.500" stroke={K} strokeWidth="1.800" /></Svg>
      </button>
    </nav>
  );
}

function PageTabs() {
  return (
    <div className="flex h-[53px] shrink-0 bg-[#f3f2f1]">
      <button aria-label="Desktop layout" className="ml-[14px] flex w-9 flex-col items-center justify-between pb-[7px] pt-[11px]">
        <Svg w={29} h={22}><path d="M1 1H28V16H1ZM14.500 16V20M9 20.500H20" stroke="#605e5c" strokeWidth="1.800" /></Svg>
        <span className="h-1 w-full rounded-full bg-[#117865]" />
      </button>
      <button aria-label="Mobile layout" className="ml-[39px] mt-[7px] self-start"><Svg w={20} h={31}><rect x="1" y="1" width="18" height="28" rx="1" stroke="#484644" strokeWidth="1.800" /><path d="M8.500 25.500H12" stroke="#484644" strokeWidth="1.600" /></Svg></button>
      <button aria-label="Previous page" className="ml-[31px]"><Svg w={7} h={12}><path d="M7 0V12L0 6Z" fill={LG} /></Svg></button>
      <button aria-label="Next page" className="ml-[27px]"><Svg w={7} h={12}><path d="M0 0V12L7 6Z" fill={LG} /></Svg></button>
      <button className="ml-[10px] w-[175px] border-b-[6px] border-l border-b-[#117865] border-l-[#a19f9d] bg-white pt-2 text-[17px] text-[#252423]">number_cards</button>
      <button aria-label="New page" className="ml-px flex w-[59px] items-center justify-center bg-[#117865]"><Svg w={17} h={17}><path d="M8.500 0V17M0 8.500H17" stroke="#fff" strokeWidth="5" /></Svg></button>
    </div>
  );
}

function StatusBar() {
  return (
    <footer className="flex h-9 shrink-0 items-center border-b border-t border-b-black border-t-[#e1dfdd] bg-[#f3f2f1] text-[17px] text-[#605e5c]">
      <span className="ml-[6px] flex-1 pt-[3px] text-[#484644]">Page 1 of 1</span>
      <button aria-label="Zoom out" className="font-bold">-</button>
      <span className="relative ml-[7px] flex h-5 w-[150px] items-center">
        <span className="absolute left-[74px] top-[7px] h-[6px] w-[2px] bg-[#605e5c]" />
        <input type="range" aria-label="Zoom" min="0" max="200" defaultValue="54" className="h-px w-full appearance-none bg-[#605e5c] [&::-webkit-slider-thumb]:h-[17px] [&::-webkit-slider-thumb]:w-[6px] [&::-webkit-slider-thumb]:appearance-none [&::-webkit-slider-thumb]:bg-[#605e5c]" />
      </span>
      <button aria-label="Zoom in" className="ml-[9px]"><Svg w={10} h={10}><path d="M5 0V10M0 5H10" stroke="#605e5c" strokeWidth="2" /></Svg></button>
      <span className="ml-[21px] w-[63px]">60%</span>
      <button aria-label="Fit to page" className="mr-[27px]"><Svg w={24} h={18}><rect x=".8" y=".8" width="22.400" height="16.400" stroke="#4a5a78" strokeWidth="1.500" /><path d="M4 7V4H8M16 4H20V7M20 11V14H16M8 14H4V11" stroke="#605e5c" strokeWidth="1.500" /></Svg></button>
    </footer>
  );
}

const Chrome = () => (
  <>
    <circle cx="18" cy="18" r="18" fill="#fbc116" />
    <path d="M18 18L2.400 9A18 18 0 0 1 33.600 9Z" fill="#e33b2e" /><path d="M18 9H33.600A18 18 0 0 0 2.400 9L10 22Z" fill="#e33b2e" />
    <path d="M2.400 9A18 18 0 0 0 17 36L26 22 18 27 10 22Z" fill="#259a48" />
    <circle cx="18" cy="18" r="8.500" fill="#fff" /><circle cx="18" cy="18" r="6.800" fill="#2c78ea" />
  </>
);

const TASKS = [
  ["Start", <g key="i" fill="url(#win)"><rect width="17" height="17" rx="1" /><rect x="18.500" width="17" height="17" rx="1" /><rect y="18.500" width="17" height="17" rx="1" /><rect x="18.500" y="18.500" width="17" height="17" rx="1" /></g>],
  ["Search", <g key="i"><circle cx="16" cy="15" r="12.500" fill="#484848" stroke="#e4e7ea" strokeWidth="3" /><path d="M25 25L33 33" stroke="#cfd6dc" strokeWidth="4" strokeLinecap="round" /></g>],
  ["Task view", <g key="i"><rect x="9" y="2" width="27" height="24" rx="2" fill="#f2f2f2" /><rect x="0" y="11" width="26" height="24" rx="2" fill="#6b6b6b" opacity=".93" /><rect x="9" y="11" width="17" height="15" fill="#bdbdbd" /></g>],
  ["Copilot", <CopilotMark key="i" />],
  ["File Explorer", <g key="i"><path d="M0 4C0 3 1 2 2 2H12L16 6H34C35 6 36 7 36 8V12H0Z" fill="#e0a100" /><path d="M0 10L14 8 17 5H34C35 5 36 6 36 7V33C36 34 35 35 34 35H2C1 35 0 34 0 33Z" fill="#ffd04e" /><path d="M6 35V28C6 25 8 24 10 24H26C28 24 30 25 30 28V35Z" fill="#1576c8" /><path d="M11 29.500H25" stroke="#0c4f91" strokeWidth="2" /></g>, "dot"],
  ["Edge", <g key="i"><path d="M1 14C3 5 10 0 18 0C28 0 36 7 36 16C36 21 32 24 27 24C23 24 21 22 22 20C24 15 20 9 12 9C7 9 3 11 1 14Z" fill="url(#edge)" /><path d="M0 20C0 13 5 9 12 9C18 9 22 13 22 17C21 14 17 13 15 16C11 20 13 27 17 30C20 33 25 34 29 32C26 35 22 36 18 36C8 36 0 29 0 20Z" fill="#1488e0" /><path d="M15 15C12 19 14 27 21 29C26 30 30 28 33 26C35 26 34 28 32 30C28 35 20 36 15 32C9 28 9 19 15 15Z" fill="#10509e" /></g>],
  ["Microsoft Store", <g key="i"><path d="M10 8V3C10 2 11 1 12 1H24C25 1 26 2 26 3V8" fill="none" stroke="#38b1e8" strokeWidth="2.500" /><path d="M1 7H35V31C35 34 33 36 31 36H5C3 36 1 34 1 31Z" fill="#f5f5f5" /><rect x="10" y="13" width="7" height="7" fill="#f25022" /><rect x="18.500" y="13" width="7" height="7" fill="#7fba00" /><rect x="10" y="21.500" width="7" height="7" fill="#00a4ef" /><rect x="18.500" y="21.500" width="7" height="7" fill="#ffb900" /></g>],
  ["Dropbox", <g key="i"><rect width="36" height="36" fill="#0061fe" /><path d="M12 9L18 13 12 17 6 13ZM24 9L30 13 24 17 18 13ZM12 17L18 21 12 25 6 21ZM24 17L30 21 24 25 18 21ZM18 23L23 26 18 29 13 26Z" fill="#fff" /></g>],
  ["myHP", <g key="i"><rect width="36" height="36" rx="1" fill="#0096d6" /><text x="3" y="22" fontSize="11" fontWeight="600" fill="#fff" fontFamily="Open Sans, sans-serif">my</text><text x="18" y="23" fontSize="15" fontWeight="700" fontStyle="italic" fill="#fff" fontFamily="Lato, sans-serif">hp</text></g>],
  ["Outlook", <g key="i"><path d="M6 12L21 3 36 12V34H8Z" fill="#28a8ea" /><path d="M12 16L26 6 36 14 18 26Z" fill="#1450a0" /><path d="M10 14L21 5 26 9 14 18Z" fill="#50d0f5" /><rect x="0" y="9" width="18" height="18" rx="2" fill="#0f6cbd" /><ellipse cx="9" cy="18" rx="4" ry="4.500" fill="none" stroke="#fff" strokeWidth="2.500" /><rect x="11" y="26" width="25" height="10" rx="3" fill="#22e3e6" /><text x="23.500" y="34.500" fontSize="9" fontWeight="700" textAnchor="middle" fill="#06282c" fontFamily="Open Sans, sans-serif">NEW</text></g>],
  ["Chrome", <Chrome key="i" />],
  ["Terminal", <g key="i"><path d="M0 6C0 5 1 4 2 4H34C35 4 36 5 36 6V9H0Z" fill="#9a9a9a" /><path d="M24 4H34L36 6V9H24Z" fill="#6a6a6a" /><path d="M0 9H36V29C36 30 35 31 34 31H2C1 31 0 30 0 29Z" fill="#454545" /><path d="M5 13L13 19 5 26" fill="none" stroke="#eee" strokeWidth="3" /><path d="M17 25H29" stroke="#fff" strokeWidth="4" /></g>, "dot"],
  ["Visual Studio Code", <g key="i"><path d="M27 0L36 4V32L27 36Z" fill="#2aa6f0" /><path d="M1 12L4 10 27 27V36L1 16Z" fill="#1576bf" /><path d="M1 24L4 27 27 9V0L1 21Z" fill="#1a82cf" /></g>, "dot"],
  ["Chrome profile", <g key="i"><Chrome /><circle cx="31" cy="5" r="12" fill="#d8ead0" /><circle cx="31" cy="1" r="4" fill="#3b7d33" /><path d="M24 12C24 5 38 5 38 12Z" fill="#3b7d33" /></g>, "dot"],
  ["Power BI", <g key="i"><path d="M19 0H32V36H19Z" fill="#d58a10" /><path d="M19 0H32V24H19Z" fill="#e5a713" /><path d="M12 9H25V36H12Z" fill="#ecc23a" /><path d="M4 18H17V36H4Z" fill="#f7da5e" /></g>, "active"],
];

function Taskbar() {
  return (
    <div className="flex h-[72px] shrink-0 items-center border-t-2 border-[#4a4a4a] bg-[#222222] text-white">
      <svg width="0" height="0" className="absolute" aria-hidden="true">
        <defs>
          <linearGradient id="win" gradientUnits="userSpaceOnUse" x1="0" y1="0" x2="36" y2="36"><stop stopColor="#7df0ff" /><stop offset="1" stopColor="#0f8eff" /></linearGradient>
          <linearGradient id="edge" x1="0" y1="0" x2="1" y2=".5"><stop stopColor="#1ba0e8" /><stop offset="1" stopColor="#5fe06a" /></linearGradient>
          <linearGradient id="rain" x1="0" y1="0" x2="0" y2="1"><stop stopColor="#7ea6f4" /><stop offset="1" stopColor="#c2d8fb" /></linearGradient>
        </defs>
      </svg>
      <div className="flex flex-1 pl-[30px]">
        <button aria-label="Weather" className="relative">
          <Svg w={36} h={42}><path d="M8 32C-2 32-2 19 7 19C8 6 28 6 29 19C39 19 38 32 29 32Z" fill="url(#rain)" transform="translate(0 -2)" /><path d="M23 22C27 27 29 31 28 35C27 39 20 39 19 35C18 31 21 27 23 22Z" fill="#1f55e8" /></Svg>
          <span className="absolute left-[17px] top-[-5px] flex h-[23px] w-[23px] items-center justify-center rounded-full bg-[#c42b1c] text-sm">1</span>
        </button>
      </div>
      <div className="mb-[2px] mr-[18px] flex h-[60px] gap-[6px]">
        {TASKS.map(([name, art, state]) => (
          <button key={name} aria-label={name} className={"flex w-[60px] flex-col items-center justify-end rounded-md border " + (state === "active" ? "border-[#3c3c3c] bg-[#303030]" : "border-transparent")}>
            <Svg w={36} h={36}>{art}</Svg>
            <span className={"mt-[5px] h-[5px] rounded-full " + (state === "active" ? "w-6 bg-[#4cc2ff]" : state === "dot" ? "w-2 bg-[#9a9a9a]" : "w-2")} />
          </button>
        ))}
      </div>
      <div className="flex flex-1 items-center justify-end pr-[32px]">
        <button aria-label="Hidden icons"><Svg w={16} h={9}><path d="M1 8L8 1 15 8" stroke="#fff" strokeWidth="2" /></Svg></button>
        <button aria-label="OneDrive" className="ml-[27px]"><Svg w={26} h={22}><path d="M6 18C-1 18-1 9 6 9C8 0 19 1 19 9C27 9 26 18 20 18Z" fill="#8a8a8a" /><path d="M3 1L23 21" stroke="#222" strokeWidth="4" /><path d="M3 1L23 21" stroke="#ddd" strokeWidth="1.500" /></Svg></button>
        <button className="ml-[22px] flex items-center gap-3" aria-label="Network, sound and battery">
          <Svg w={24} h={18}><path d="M1 6C7-1 17-1 23 6M4.500 9.500C9 5 15 5 19.500 9.500M8 13C10.500 10.500 13.500 10.500 16 13" stroke="#fff" strokeWidth="1.800" /><circle cx="12" cy="16" r="2" fill="#fff" /></Svg>
          <Svg w={24} h={18}><path d="M1 6V12H5L10 17V1L5 6ZM13 6C15 8 15 10 13 12M16 3C19.500 6 19.500 12 16 15" stroke="#fff" strokeWidth="1.700" /><path d="M19 1C24 5 24 13 19 17" stroke="#777" strokeWidth="1.500" /></Svg>
          <Svg w={25} h={16}><rect x="1" y="1" width="19" height="14" rx="3" stroke="#fff" strokeWidth="1.800" /><rect x="4" y="4" width="5.500" height="8" fill="#fff" /><path d="M22.500 5.500V10.500" stroke="#fff" strokeWidth="2.500" /></Svg>
        </button>
        <div className="ml-[15px] w-[102px] text-right text-[17px] leading-6"><div>15:16</div><div>12/12/2024</div></div>
        <button aria-label="Notifications" className="ml-[13px]"><Svg w={20} h={24}><path d="M10 0C5 0 3 4 3 8V14L0 19H20L17 14V8C17 4 15 0 10 0Z" fill="#7ee0f8" /><path d="M6 21H14L12 24H8Z" fill="#7ee0f8" /></Svg></button>
      </div>
    </div>
  );
}

export default function App() {
  return (
    <div className="flex h-screen flex-col overflow-hidden bg-white font-['Open_Sans',sans-serif]">
      <TitleBar />
      <Tabs />
      <Ribbon />
      <main className="flex min-h-0 flex-1">
        <LeftRail />
        <div className="flex min-w-0 flex-1 flex-col">
          <div className="flex min-h-0 flex-1">
            <Report />
            <FiltersPane />
          </div>
          <PageTabs />
        </div>
        <BuildPane />
        <DataPane />
        <RightRail />
      </main>
      <StatusBar />
      <Taskbar />
    </div>
  );
}
